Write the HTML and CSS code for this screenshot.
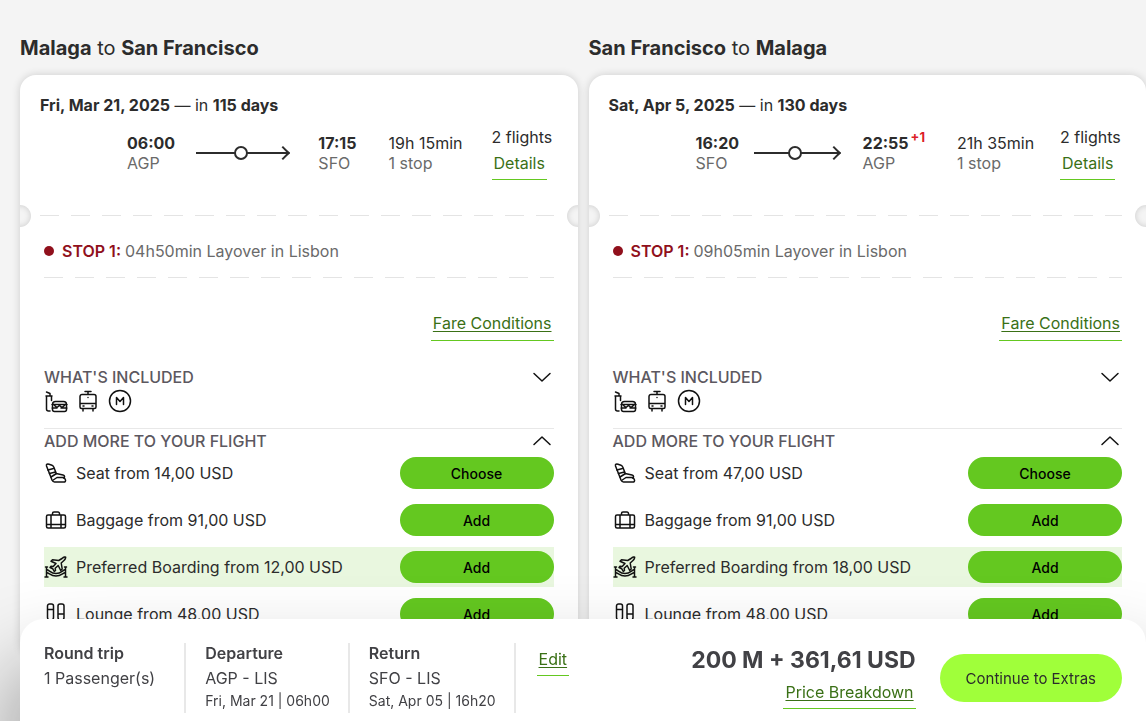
FILE: index.html
```html
<!DOCTYPE html>
<html lang="en">
<head>
    <meta charset="UTF-8">
    <meta name="viewport" content="width=device-width, initial-scale=1.0">
    <title>Your flights</title>
    <link rel="stylesheet" href="styles.css">
</head>
<body>
    <!-- Shared icons -->
    <svg class="sprite" aria-hidden="true">
        <symbol id="icon-food" viewBox="0 0 24 24">
            <path d="M2.500 3l3.500 1.500V7M2 7h6M2.500 7v13a2 2 0 0 0 2 2H6M7.500 7v4.500"/>
            <path d="M8.500 15.500a3 3 0 0 1 3-3h8a3 3 0 0 1 3 3zM8 15.500h15M8.500 15.500v2.500M22.500 15.500v2.500M10.500 16.500l2.500 2 2.500-2 2.500 2 2.500-2M8 19h5M17 19h6M8.500 19v1.500a2 2 0 0 0 2 2h10a2 2 0 0 0 2-2V19"/>
        </symbol>
        <symbol id="icon-tram" viewBox="0 0 24 24">
            <path d="M9 2.500h6M12 2.500V5.500M6 5.500h12a2 2 0 0 1 2 2V18a1.500 1.500 0 0 1-1.500 1.500h-13A1.500 1.500 0 0 1 4 18V7.500a2 2 0 0 1 2-2zM4 14.500h16M7 20v2M17 20v2M12 8.500h0M7 17h1M16 17h1"/>
        </symbol>
        <symbol id="icon-metro" viewBox="0 0 24 24">
            <circle cx="12" cy="12" r="10.500"/>
            <path d="M8.500 15.500v-7l3.500 4 3.500-4v7"/>
        </symbol>
        <symbol id="icon-seat" viewBox="0 0 24 24">
            <path d="M2.500 5c-.5-1.800 1-2.300 2.500-1.800l3 1c1.200.4 1.600 1.300 2 2.300l2.200 6 6.800 1.500c2 .5 2 2.500.5 3 2.500.5 2.800 4 .5 4H10.500c-1.200 0-2-1-2.500-2z"/>
            <path d="M4 9l5.500-1.500M5.500 12.500l6-1.500M7 16l5.500-3.500M8.500 19.500l4.500-3h7"/>
        </symbol>
        <symbol id="icon-bag" viewBox="0 0 24 24">
            <path d="M4 7h16a1.500 1.500 0 0 1 1.500 1.500v10A1.500 1.500 0 0 1 20 20H4a1.500 1.500 0 0 1-1.500-1.500v-10A1.500 1.500 0 0 1 4 7zM8.500 7V5.500A1.500 1.500 0 0 1 10 4h4a1.500 1.500 0 0 1 1.500 1.500V7M7 7v13M17 7v13M2.500 16.500h19"/>
        </symbol>
        <symbol id="icon-boarding" viewBox="0 0 24 24">
            <path d="M20.500 2c1-.3 1.500.2 1 1.200-.3 1-1 1.800-1.800 2.500l-2.500 2.300 1 6-1.500 1.500-2.500-5-3 2.800.3 2.200-1.200 1-1.500-2.700-2.800-1.300 1-1.200 2.200.2 2.800-3-5-2.300 1.500-1.500 6.200.8L18 3.500c.8-.7 1.500-1.200 2.500-1.500z"/>
            <path d="M2.500 12v10M21.500 12v10M1 22h3M20 22h3M1.500 12h2M20.500 12h2M2.500 14.500c3 .5 4 4 9.500 4s6.500-3.500 9.500-4M2.500 17.500c3 .5 4 3.500 9.500 3.500s6.500-3 9.500-3.500"/>
        </symbol>
        <symbol id="icon-lounge" viewBox="0 0 24 24">
            <path d="M3.500 4a2 2 0 0 1 2-2h2a2 2 0 0 1 2 2v11.500a3 3 0 0 1-6 0zM3.500 7.500h6M14 4a2 2 0 0 1 2-2h2a2 2 0 0 1 2 2v11.500a3 3 0 0 1-6 0zM14 12h6"/>
        </symbol>
        <symbol id="icon-chevron" viewBox="0 0 24 24">
            <path d="M4 8.500l8 7.500 8-7.500"/>
        </symbol>
    </svg>

    <main class="flights">
        <section class="flight">
            <h2 class="route"><b>Malaga</b> to <b>San Francisco</b></h2>
            <div class="card">
                <div class="summary">
                    <p class="date"><b>Fri, Mar 21, 2025</b> — in <b>115 days</b></p>
                    <div class="leg">
                        <div class="times">
                            <div class="point"><b>06:00</b><span>AGP</span></div>
                            <div class="line"></div>
                            <div class="point"><b>17:15</b><span>SFO</span></div>
                        </div>
                        <div class="duration">19h 15min<span>1 stop</span></div>
                        <div class="details">2 flights<a class="link link-plain" href="#">Details</a></div>
                    </div>
                </div>
                <div class="tear"></div>
                <div class="content">
                    <p class="stop"><b>STOP 1:</b> 04h50min Layover in Lisbon</p>
                    <div class="dashes"></div>
                    <div class="fare"><a class="link" href="#">Fare Conditions</a></div>
                    <div class="included">
                        <button type="button" class="toggle">WHAT'S INCLUDED<svg class="icon"><use href="#icon-chevron"/></svg></button>
                        <div class="perks">
                            <svg class="icon"><use href="#icon-food"/></svg>
                            <svg class="icon"><use href="#icon-tram"/></svg>
                            <svg class="icon"><use href="#icon-metro"/></svg>
                        </div>
                    </div>
                    <button type="button" class="toggle open">ADD MORE TO YOUR FLIGHT<svg class="icon"><use href="#icon-chevron"/></svg></button>
                    <ul class="extras">
                        <li><svg class="icon"><use href="#icon-seat"/></svg>Seat from 14,00 USD<button type="button">Choose</button></li>
                        <li><svg class="icon"><use href="#icon-bag"/></svg>Baggage from 91,00 USD<button type="button">Add</button></li>
                        <li class="highlight"><svg class="icon"><use href="#icon-boarding"/></svg>Preferred Boarding from 12,00 USD<button type="button">Add</button></li>
                        <li><svg class="icon"><use href="#icon-lounge"/></svg>Lounge from 48,00 USD<button type="button">Add</button></li>
                    </ul>
                </div>
            </div>
        </section>

        <section class="flight">
            <h2 class="route"><b>San Francisco</b> to <b>Malaga</b></h2>
            <div class="card">
                <div class="summary">
                    <p class="date"><b>Sat, Apr 5, 2025</b> — in <b>130 days</b></p>
                    <div class="leg">
                        <div class="times next-day">
                            <div class="point"><b>16:20</b><span>SFO</span></div>
                            <div class="line"></div>
                            <div class="point"><b>22:55<sup>+1</sup></b><span>AGP</span></div>
                        </div>
                        <div class="duration">21h 35min<span>1 stop</span></div>
                        <div class="details">2 flights<a class="link link-plain" href="#">Details</a></div>
                    </div>
                </div>
                <div class="tear"></div>
                <div class="content">
                    <p class="stop"><b>STOP 1:</b> 09h05min Layover in Lisbon</p>
                    <div class="dashes"></div>
                    <div class="fare"><a class="link" href="#">Fare Conditions</a></div>
                    <div class="included">
                        <button type="button" class="toggle">WHAT'S INCLUDED<svg class="icon"><use href="#icon-chevron"/></svg></button>
                        <div class="perks">
                            <svg class="icon"><use href="#icon-food"/></svg>
                            <svg class="icon"><use href="#icon-tram"/></svg>
                            <svg class="icon"><use href="#icon-metro"/></svg>
                        </div>
                    </div>
                    <button type="button" class="toggle open">ADD MORE TO YOUR FLIGHT<svg class="icon"><use href="#icon-chevron"/></svg></button>
                    <ul class="extras">
                        <li><svg class="icon"><use href="#icon-seat"/></svg>Seat from 47,00 USD<button type="button">Choose</button></li>
                        <li><svg class="icon"><use href="#icon-bag"/></svg>Baggage from 91,00 USD<button type="button">Add</button></li>
                        <li class="highlight"><svg class="icon"><use href="#icon-boarding"/></svg>Preferred Boarding from 18,00 USD<button type="button">Add</button></li>
                        <li><svg class="icon"><use href="#icon-lounge"/></svg>Lounge from 48,00 USD<button type="button">Add</button></li>
                    </ul>
                </div>
            </div>
        </section>
    </main>

    <footer class="bar">
        <div class="trip"><b>Round trip</b><span>1 Passenger(s)</span></div>
        <div class="trip"><b>Departure</b><span>AGP - LIS</span><small>Fri, Mar 21 | 06h00</small></div>
        <div class="trip"><b>Return</b><span>SFO - LIS</span><small>Sat, Apr 05 | 16h20</small></div>
        <a class="link edit" href="#">Edit</a>
        <div class="total">
            <strong>200 M + 361,61 USD</strong>
            <a class="link" href="#">Price Breakdown</a>
        </div>
        <button type="button" class="continue">Continue to Extras</button>
    </footer>
</body>
</html>
```
FILE: styles.css
```css
*,
*::before,
*::after {
    box-sizing: border-box;
}

html {
    scrollbar-width: none;
}

body {
    margin: 0;
    background-color: #f4f4f4;
    color: #2c2c2c;
    font-family: Inter, "Liberation Sans", sans-serif;
    font-size: 16px;
    line-height: 20px;
}

h2, p, ul {
    margin: 0;
    padding: 0;
}

button {
    border: none;
    font-family: inherit;
    cursor: pointer;
}

b {
    font-weight: 600;
}

.sprite {
    display: none;
}

.icon {
    width: 24px;
    height: 24px;
    flex-shrink: 0;
    fill: none;
    stroke: #111;
    stroke-width: 1.5;
    stroke-linecap: round;
    stroke-linejoin: round;
}

.flights {
    display: grid;
    grid-template-columns: 1fr 1fr;
    gap: 11px;
    padding: 36px 0 140px 20px;
}

.route {
    font-size: 20px;
    line-height: 24px;
    font-weight: 400;
    margin-bottom: 15px;
}

.route b,
.date b {
    font-weight: 700;
}

.card {
    background-color: #fff;
    border-radius: 16px;
    box-shadow: 0 0 8px rgba(0, 0, 0, 0.16);
}

.summary {
    padding: 20px 24px 0 20px;
}

.leg {
    display: flex;
    margin-top: 12px;
    padding-left: 87px;
}

/* departure, line and arrival */
.times {
    display: flex;
    flex: 1;
    padding-top: 6px;
    margin-right: 32px;
}

.point b,
.point span,
.duration span {
    display: block;
}

.point span,
.duration span {
    color: #6a6a6a;
}

.point b {
    font-weight: 700;
    white-space: nowrap;
}

.point sup {
    margin-left: 2px;
    color: #dc1e28;
    font-size: 13px;
    line-height: 0;
    vertical-align: 7px;
}

.line {
    position: relative;
    flex: 1;
    height: 2px;
    margin: 19px 29px 0 21px;
    background-color: #2c2c2c;
}

.next-day .line {
    margin: 19px 23px 0 15px;
}

.line::before {
    content: "";
    position: absolute;
    top: -6px;
    left: calc(50% - 9px);
    width: 14px;
    height: 14px;
    border: 2px solid #2c2c2c;
    border-radius: 50%;
    background-color: #fff;
}

.line::after {
    content: "";
    position: absolute;
    top: -4px;
    right: 1px;
    width: 10px;
    height: 10px;
    border: solid #2c2c2c;
    border-width: 2px 2px 0 0;
    transform: rotate(45deg);
}

.duration {
    width: 103px;
    padding-top: 6px;
}

.details {
    width: 62px;
    white-space: nowrap;
}

.link {
    display: block;
    width: fit-content;
    padding: 0 2px 6px;
    border-bottom: 1px solid #64c820;
    color: #3a7016;
    text-underline-offset: 2px;
}

.link-plain {
    margin-top: 6px;
    text-decoration: none;
}

/* dashed tear line with a round notch at each end */
.tear {
    position: relative;
    height: 22px;
    margin-top: 25px;
    padding: 10px 24px 0 20px;
    overflow: hidden;
}

.tear::before,
.tear::after {
    content: "";
    position: absolute;
    top: 0;
    left: -11px;
    width: 22px;
    height: 22px;
    border-radius: 50%;
    background-color: #f4f4f4;
    box-shadow: inset 0 0 6px rgba(0, 0, 0, 0.16);
}

.tear::after {
    left: auto;
    right: -11px;
}

.tear,
.dashes {
    background-image: repeating-linear-gradient(to right, #e4e4e4 0 19px, transparent 19px 31px);
    background-repeat: no-repeat;
    background-size: 100% 1px;
}

.tear {
    background-origin: content-box;
    background-clip: content-box;
}

.dashes {
    height: 1px;
}

.content {
    padding: 14px 24px 24px;
}

.stop {
    display: flex;
    align-items: center;
    gap: 4px;
    margin-bottom: 16px;
    color: #6a6a6a;
}

.stop::before {
    content: "";
    width: 10px;
    height: 10px;
    margin-right: 4px;
    border-radius: 50%;
    background-color: #90101c;
}

.stop b {
    color: #90101c;
}

.fare {
    display: flex;
    justify-content: flex-end;
    margin: 35px 0 24px;
}

.fare .link {
    padding: 0 2px 7px;
}

.toggle {
    display: flex;
    justify-content: space-between;
    align-items: center;
    width: 100%;
    height: 24px;
    padding: 0;
    background: none;
    color: #5c5860;
    font-size: 16px;
    font-weight: 500;
}

.open .icon {
    transform: rotate(180deg);
}

.included {
    padding-bottom: 15px;
    border-bottom: 1px solid #e8e8e8;
}

.perks {
    display: flex;
    gap: 8px;
}

.extras {
    display: grid;
    gap: 7px;
    list-style: none;
}

.extras li {
    display: flex;
    align-items: center;
    gap: 8px;
    height: 40px;
}

.extras .highlight {
    background-color: #e9f7df;
}

.extras button {
    width: 154px;
    height: 32px;
    margin-left: auto;
    border-radius: 16px;
    background-color: #64c820;
    color: #000;
    font-size: 14px;
    font-weight: 500;
}

/* Booking bar, always at the bottom of the window */
.bar {
    position: fixed;
    left: 20px;
    right: 0;
    bottom: 0;
    display: flex;
    align-items: flex-start;
    padding: 24px 24px 8px;
    border-radius: 24px 24px 0 0;
    background-color: #fff;
    color: #414145;
    box-shadow: 0 60px 80px 20px rgba(0, 0, 0, 0.3);
}

.trip {
    display: flex;
    flex-direction: column;
    height: 70px;
    margin-right: 19px;
    padding-right: 18px;
    border-right: 2px solid #e8e8e8;
    white-space: nowrap;
}

.trip:first-child {
    padding-right: 29px;
}

.trip span {
    margin: 5px 0 3px;
}

.trip small {
    font-size: 14px;
}

.edit {
    margin: 6px 0 0 2px;
}

.total {
    display: flex;
    flex-direction: column;
    align-items: flex-end;
    gap: 10px;
    margin: 5px 24px 0 auto;
}

.total strong {
    font-size: 23px;
    line-height: 24px;
    font-weight: 700;
}

.continue {
    height: 48px;
    margin-top: 11px;
    padding: 0 26px;
    border-radius: 24px;
    background-color: #a0ff3a;
    color: #2c2c2c;
    font-size: 15px;
    white-space: nowrap;
}
```
